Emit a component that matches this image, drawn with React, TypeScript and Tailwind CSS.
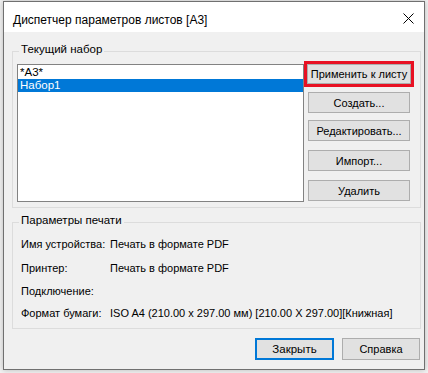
import React from 'react'

const font = "font-['Liberation_Sans',Arial,sans-serif]"

function WinButton({ label, className = '' }: { label: string; className?: string }) {
  return (
    <div
      className={`flex items-center justify-center bg-[#e1e1e1] border border-[#adadad] text-[11px] leading-[14px] text-black whitespace-nowrap ${className}`}
    >
      {label}
    </div>
  )
}

const printParams: [string, string][] = [
  ['Имя устройства:', 'Печать в формате PDF'],
  ['Принтер:', 'Печать в формате PDF'],
  ['Подключение:', ''],
  ['Формат бумаги:', 'ISO A4 (210.00 x 297.00 мм) [210.00 X 297.00][Книжная]'],
]
const rowGaps = ['mt-0', 'mt-[10px]', 'mt-[9px]', 'mt-[8px]']

export default function App() {
  return (
    <div className={`w-[428px] h-[373px] bg-[#f3f3f3] overflow-hidden ${font}`}>
      <div className="ml-[3px] mt-[1px] w-[422px] h-[369px] border border-[#707070] bg-[#f0f0f0] shadow-[0_0_6px_rgba(0,0,0,0.25)] flex flex-col">
        {/* title bar */}
        <div className="h-[30px] shrink-0 bg-white flex items-center justify-between pl-[9px] pr-[10px] pt-[5px]">
          <span className="text-[12px] leading-[14px] text-black">Диспетчер параметров листов [A3]</span>
          <svg width="11" height="11" viewBox="0 0 11 11" className="mb-[2px]">
            <path d="M0.5 0.5 L10.5 10.5 M10.5 0.5 L0.5 10.5" stroke="#000" strokeWidth="1" fill="none" />
          </svg>
        </div>

        {/* Текущий набор */}
        <div className="relative shrink-0 mt-[19px] ml-[8px] w-[409px] h-[157px] border border-[#dcdcdc] pl-[4px] pt-[12px] flex">
          <span className="absolute left-[6px] top-[-10px] px-[2px] bg-[#f0f0f0] text-[11.5px] leading-[14px] text-black">
            Текущий набор
          </span>
          <div className="w-[287px] h-[138px] border border-[#828282] bg-white pt-[1px] text-[11.5px] leading-[13px]">
            <div className="h-[13px] pl-[2px] text-black">*A3*</div>
            <div className="h-[13px] pl-[2px] bg-[#0078d7] text-white">Набор1</div>
          </div>
          <div className="flex flex-col w-[110px] mt-[-3px]">
            <div className="h-[26px] border-[3px] border-[#e81123]">
              <WinButton label="Применить к листу" className="h-full w-full" />
            </div>
            <WinButton label="Создать..." className="mt-[5px] ml-[4px] w-[102px] h-[21px]" />
            <WinButton label="Редактировать..." className="mt-[7px] ml-[4px] w-[102px] h-[21px]" />
            <WinButton label="Импорт..." className="mt-[9px] ml-[4px] w-[102px] h-[21px]" />
            <WinButton label="Удалить" className="mt-[9px] ml-[4px] w-[102px] h-[21px]" />
          </div>
        </div>

        {/* Параметры печати */}
        <div className="relative shrink-0 mt-[14px] ml-[8px] w-[409px] h-[107px] border border-[#dcdcdc] pl-[8px] pt-[14px] flex flex-col">
          <span className="absolute left-[6px] top-[-10px] px-[2px] bg-[#f0f0f0] text-[11.5px] leading-[14px] text-black">
            Параметры печати
          </span>
          {printParams.map(([label, value], i) => (
            <div key={label} className={`flex text-[11px] leading-[14px] text-black whitespace-nowrap ${rowGaps[i]}`}>
              <span className="w-[89px] shrink-0">{label}</span>
              <span>{value}</span>
            </div>
          ))}
        </div>

        {/* bottom buttons */}
        <div className="flex shrink-0 justify-end gap-[8px] mt-[9px] pr-[4px]">
          <div className="w-[79px] h-[22px] flex items-center justify-center bg-[#e1e1e1] border-2 border-[#0078d7] text-[11.5px] leading-[14px] text-black">
            Закрыть
          </div>
          <WinButton label="Справка" className="w-[78px] h-[22px] text-[11.5px]" />
        </div>
      </div>
    </div>
  )
}
